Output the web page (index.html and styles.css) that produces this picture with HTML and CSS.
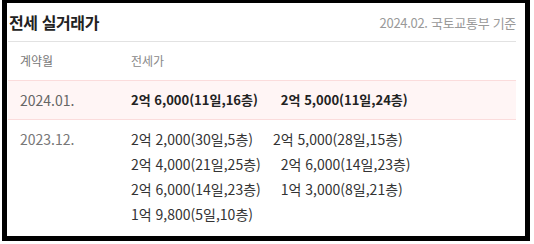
FILE: index.html
```html
<!DOCTYPE html>
<html lang="ko">
<head>
<meta charset="utf-8">
<link rel="stylesheet" href="styles.css">
</head>
<body>
<div class="frame">
  <div class="panel">
    <div class="head">
      <h2 class="title">전세 실거래가</h2>
      <span class="source">2024.02. 국토교통부 기준</span>
    </div>
    <div class="row row-head">
      <div class="col-date">계약월</div>
      <div class="col-vals">전세가</div>
    </div>
    <div class="row row-hl">
      <div class="col-date">2024.01.</div>
      <div class="col-vals">
        <span class="item">2억 6,000(11일,16층)</span>
        <span class="item">2억 5,000(11일,24층)</span>
      </div>
    </div>
    <div class="row row-list">
      <div class="col-date">2023.12.</div>
      <div class="col-vals">
        <span class="item">2억 2,000(30일,5층)</span>
        <span class="item">2억 5,000(28일,15층)</span>
        <span class="item">2억 4,000(21일,25층)</span>
        <span class="item">2억 6,000(14일,23층)</span>
        <span class="item">2억 6,000(14일,23층)</span>
        <span class="item">1억 3,000(8일,21층)</span>
        <span class="item">1억 9,800(5일,10층)</span>
      </div>
    </div>
  </div>
</div>
</body>
</html>
```

FILE: styles.css
```css
html, body {
  margin: 0;
  padding: 0;
  background: #fff;
}
body {
  font-family: "Noto Sans CJK KR", "Noto Sans", sans-serif;
  color: #333;
}
.frame {
  margin-left: 2px;
  width: 518px;
  height: 233px;
  border: 5px solid #000;
  border-top-width: 3px;
  background: #fff;
  overflow: hidden;
}
.panel {
  padding: 0 9px 0 1px;
}
.head {
  height: 38px;
  display: flex;
  align-items: center;
  justify-content: space-between;
  border-bottom: 1px solid #e2e2e2;
}
.title {
  margin: 0 0 0 1px;
  font-size: 16px;
  font-weight: 700;
  color: #222;
  letter-spacing: -0.4px;
}
.source {
  font-size: 13px;
  color: #999;
  letter-spacing: -0.3px;
}
.row {
  display: flex;
  padding: 7px 0;
  line-height: 24px;
  font-size: 14px;
}
.row-head {
  font-size: 12px;
  color: #888;
  height: 24px;
}
.row-hl {
  background: #fff5f5;
  border-top: 1px solid #fbdcdc;
  border-bottom: 1px solid #fbdcdc;
}
.row-hl .col-vals {
  font-weight: 700;
  font-size: 13px;
  color: #222;
  column-gap: 23px;
}
.row-hl .col-date {
  color: #666;
}
.row-list .col-vals {
  row-gap: 1px;
}
.col-date {
  width: 111px;
  padding-left: 12px;
  flex: none;
  color: #777;
}
.col-vals {
  flex: 1;
  display: flex;
  flex-wrap: wrap;
  column-gap: 20px;
  color: #333;
}
.row-head .col-vals {
  color: #888;
}
.item {
  white-space: nowrap;
}
```
